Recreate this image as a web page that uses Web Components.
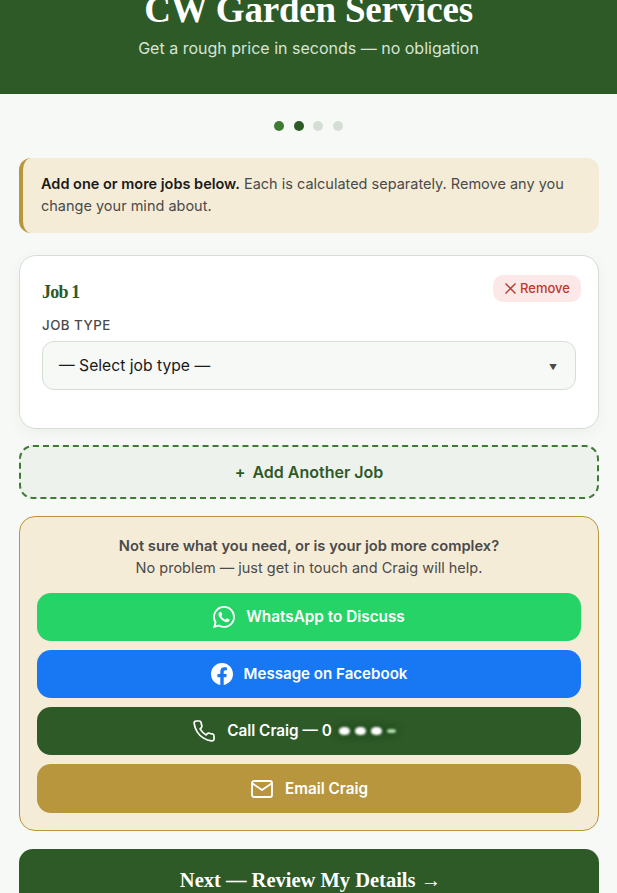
<!DOCTYPE html>
<html lang="en"><head><meta charset="utf-8"><title>CW Garden Services</title>
<style>
html,body{margin:0;padding:0;height:100%;overflow:hidden;background:#f7f9f6}
body{font-family:Inter,"Liberation Sans",sans-serif;color:#1a1a1a}
cw-page{height:893px;overflow:hidden}
</style></head><body>
<cw-page>
  <cw-header title="CW Garden Services" subtitle="Get a rough price in seconds — no obligation"></cw-header>
  <cw-main>
    <cw-steps></cw-steps>
    <cw-notice><b>Add one or more jobs below.</b> Each is calculated separately. Remove any you change your mind about.</cw-notice>
    <cw-job-card name="Job 1"></cw-job-card>
    <cw-add-job>Add Another Job</cw-add-job>
    <cw-contact>
      <cw-action kind="wa">WhatsApp to Discuss</cw-action>
      <cw-action kind="fb">Message on Facebook</cw-action>
      <cw-action kind="call">Call Craig — 0</cw-action>
      <cw-action kind="mail">Email Craig</cw-action>
    </cw-contact>
    <cw-next>Next — Review My Details →</cw-next>
  </cw-main>
</cw-page>
<script>
const SANS='Inter,"Liberation Sans",sans-serif', SERIF='"Liberation Serif",serif';
function def(name,html,init){
  customElements.define(name,class extends HTMLElement{
    constructor(){super();this.attachShadow({mode:'open'}).innerHTML=typeof html==='function'?html(this):html;}
    connectedCallback(){
      if(typeof html==='function')this.shadowRoot.innerHTML=html(this);
      if(init)init(this);
    }
  });
}
def('cw-page',`<style>:host{display:block;width:100%}</style><slot></slot>`);
def('cw-header',el=>`<style>
:host{display:flex;flex-direction:column;justify-content:flex-end;align-items:center;height:94px;background:#2d5a27;overflow:hidden;padding-bottom:35px;box-sizing:border-box}
h1{margin:0 0 5px;font:700 37px/44px ${SERIF};letter-spacing:-.2px;color:#fff;white-space:nowrap}
p{margin:0;font:400 16px/22px ${SANS};color:#d8e4d4;white-space:nowrap}
</style><h1>${el.getAttribute('title')||''}</h1><p>${el.getAttribute('subtitle')||''}</p>`);
def('cw-main',`<style>:host{display:flex;flex-direction:column;padding:26px 18px 0 19px}</style><slot></slot>`);
def('cw-steps',`<style>
:host{display:flex;justify-content:center;gap:9.7px;margin-bottom:27px;height:11px;align-items:center;padding-right:1px}
i{width:10px;height:10px;border-radius:50%;background:#d5ded5}
.a{background:#3f7a35}.b{background:#2d5a27}
</style><i class="a"></i><i class="b"></i><i></i><i></i>`);
def('cw-notice',`<style>
:host{display:block;background:#f5ecd7;border-left:4px solid #b8963e;border-radius:12px;padding:15px 18px 16px;font:400 14.5px/22px ${SANS};color:#4a4a4a}
::slotted(b){color:#1a1a1a;font-weight:600}
</style><slot></slot>`);
def('cw-job-card',el=>`<style>
:host{display:block;margin-top:22px;background:#fff;border:1px solid #d5ded5;border-radius:17px;box-shadow:0 4px 14px rgba(45,90,39,.06);padding:19px 22px 38px;height:174px;box-sizing:border-box}
.top{display:flex;justify-content:space-between;align-items:flex-start;margin-right:-5px}
h2{margin:6px 0 0;font:700 18px/22px ${SERIF};letter-spacing:-.8px;color:#2d5a27}
button{display:flex;align-items:center;gap:3px;height:27px;width:88px;justify-content:center;border:0;border-radius:10px;background:#fde8e8;color:#c0392b;font:500 13px/1 ${SANS};padding:0}
svg{width:13px;height:13px}
label{display:block;margin-top:13px;font:500 13.3px/18px ${SANS};letter-spacing:.5px;text-transform:uppercase;color:#4a4a4a}
.sel{margin-top:7px;height:49px;box-sizing:border-box;border:1px solid #d5ded5;border-radius:12px;background:#f7f9f6;display:flex;align-items:center;justify-content:space-between;padding:0 18px 0 16px;font:400 15.7px/1 ${SANS};color:#1a1a1a}
.arrow{font-size:8px;color:#4a4a4a;margin-top:3px}
</style><div class="top"><h2>${el.getAttribute('name')}</h2><button><svg viewBox="0 0 13 13" fill="none" stroke="#c0392b" stroke-width="1.4"><path d="M1.5 1.5l10 10M11.5 1.5l-10 10"/></svg>Remove</button></div>
<label>Job type</label><div class="sel"><span>— Select job type —</span><span class="arrow">▼</span></div>`);
def('cw-add-job',`<style>
:host{display:flex;align-items:center;justify-content:center;gap:7px;margin-top:16px;height:54px;box-sizing:border-box;border:2px dashed #3f7a35;border-radius:14px;background:#edf2ec;color:#2d5a27;font:600 16px/1 ${SANS};padding-bottom:1px}
</style><span>+</span><slot></slot>`);
def('cw-contact',`<style>
:host{display:block;margin-top:17px;background:#f5ecd7;border:1px solid #b8963e;border-radius:16px;padding:18px 17px 17px;height:315px;box-sizing:border-box;text-align:center}
p{margin:0;font:400 14.5px/22px ${SANS};color:#4a4a4a}
b{font-weight:600;font-size:14.7px}
.btns{display:flex;flex-direction:column;gap:9px;margin-top:14px}
</style><p><b>Not sure what you need, or is your job more complex?</b><br>No problem — just get in touch and Craig will help.</p><div class="btns"><slot></slot></div>`);
const ICONS={
 wa:`<svg width="22" height="22" viewBox="0 0 24 24" fill="#fff"><path d="M17.472 14.382c-.297-.149-1.758-.867-2.03-.967-.273-.099-.471-.148-.67.15-.197.297-.767.966-.94 1.164-.173.199-.347.223-.644.075-.297-.15-1.255-.463-2.39-1.475-.883-.788-1.48-1.761-1.653-2.059-.173-.297-.018-.458.13-.606.134-.133.298-.347.446-.52.149-.174.198-.298.298-.497.099-.198.05-.371-.025-.52-.075-.149-.669-1.612-.916-2.207-.242-.579-.487-.5-.669-.51-.173-.008-.371-.01-.57-.01-.198 0-.52.074-.792.372-.272.297-1.04 1.016-1.04 2.479 0 1.462 1.065 2.875 1.213 3.074.149.198 2.096 3.2 5.077 4.487.709.306 1.262.489 1.694.625.712.227 1.36.195 1.871.118.571-.085 1.758-.719 2.006-1.413.248-.694.248-1.289.173-1.413-.074-.124-.272-.198-.57-.347m-5.421 7.403h-.004a9.87 9.87 0 01-5.031-1.378l-.361-.214-3.741.982.998-3.648-.235-.374a9.86 9.86 0 01-1.51-5.26c.001-5.45 4.436-9.884 9.888-9.884 2.64 0 5.122 1.03 6.988 2.898a9.825 9.825 0 012.893 6.994c-.003 5.45-4.437 9.884-9.885 9.884m8.413-18.297A11.815 11.815 0 0012.05 0C5.495 0 .16 5.335.157 11.892c0 2.096.547 4.142 1.588 5.945L.057 24l6.305-1.654a11.882 11.882 0 005.683 1.448h.005c6.554 0 11.89-5.335 11.893-11.893a11.821 11.821 0 00-3.48-8.413z"/></svg>`,
 fb:`<svg width="22" height="22" viewBox="0 0 24 24" fill="#fff"><path d="M24 12.073c0-6.627-5.373-12-12-12s-12 5.373-12 12c0 5.99 4.388 10.954 10.125 11.854v-8.385H7.078v-3.47h3.047V9.43c0-3.007 1.792-4.669 4.533-4.669 1.312 0 2.686.235 2.686.235v2.953H15.83c-1.491 0-1.956.925-1.956 1.874v2.25h3.328l-.532 3.47h-2.796v8.385C19.612 23.027 24 18.062 24 12.073z"/></svg>`,
 call:`<svg width="24" height="24" viewBox="0 0 24 24" fill="none" stroke="#fff" stroke-width="1.7" stroke-linecap="round" stroke-linejoin="round"><path d="M22 16.92v3a2 2 0 0 1-2.18 2 19.79 19.79 0 0 1-8.63-3.07 19.5 19.5 0 0 1-6-6 19.79 19.79 0 0 1-3.07-8.67A2 2 0 0 1 4.11 2h3a2 2 0 0 1 2 1.72 12.84 12.84 0 0 0 .7 2.81 2 2 0 0 1-.45 2.11L8.09 9.91a16 16 0 0 0 6 6l1.27-1.27a2 2 0 0 1 2.11-.45 12.84 12.84 0 0 0 2.81.7A2 2 0 0 1 22 16.92z"/></svg>`,
 mail:`<svg width="24" height="24" viewBox="0 0 24 24" fill="none" stroke="#fff" stroke-width="1.8" stroke-linecap="round" stroke-linejoin="round"><rect x="2" y="4" width="20" height="16" rx="2"/><path d="M2.5 6.5L12 13l9.5-6.5"/></svg>`
};
const BG={wa:'#25d366',fb:'#1877f2',call:'#2d5a27',mail:'#b8963e'};
def('cw-action',el=>{const k=el.getAttribute('kind');return `<style>
:host{display:flex;align-items:center;justify-content:center;gap:11px;height:${k==='mail'?49:48}px;border-radius:14px;background:${BG[k]};color:#fff;font:600 ${k==='fb'?15.1:15.3}px/1 ${SANS}}
.mask{display:inline-flex;align-items:center;gap:5px;margin-left:-11px;padding:0 30px 0 7px;height:24px}
.mask i{width:11px;height:8px;border-radius:45%;background:#fff;filter:blur(1px);box-shadow:0 0 7px 2px rgba(10,50,10,.45)}
.mask i:last-child{width:9px;height:4px;background:#b6e0ae}
</style>${ICONS[k]}<span><slot></slot></span>${k==='call'?'<span class="mask" aria-hidden="true"><i></i><i></i><i></i><i></i></span>':''}`});
def('cw-next',`<style>
:host{display:flex;align-items:center;justify-content:center;margin-top:18px;height:62px;flex:none;border-radius:14px;background:#2d5a27;color:#fff;font:700 20.5px/1 ${SERIF};padding-left:3px}
</style><slot></slot>`);
</script>
</body></html>
